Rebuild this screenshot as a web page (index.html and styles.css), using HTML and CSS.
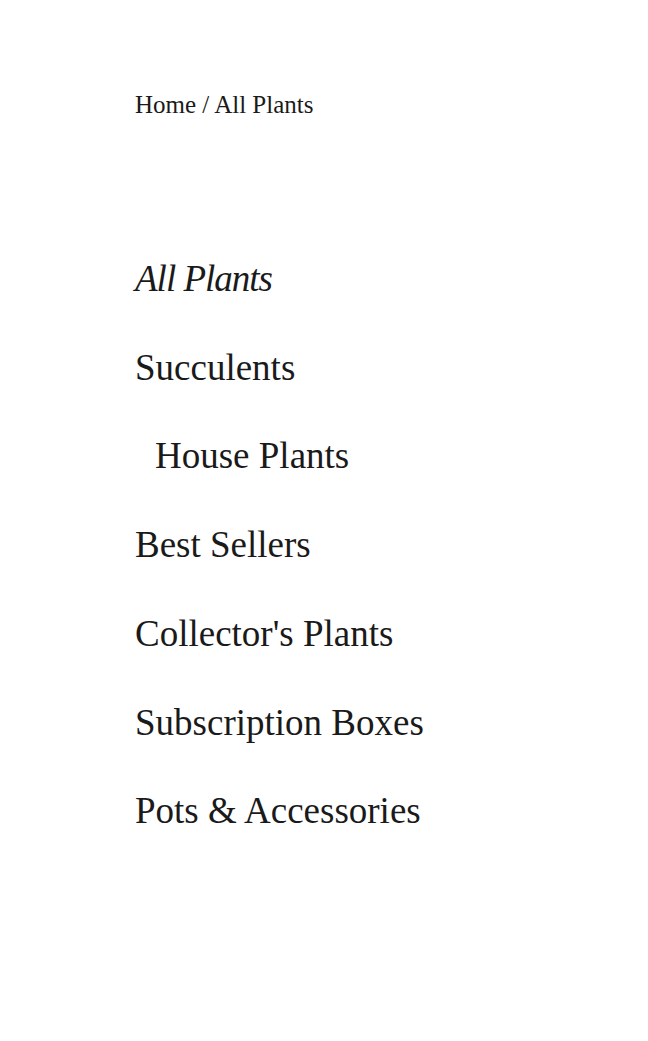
FILE: index.html
```html
<!DOCTYPE html>
<html lang="en">
<head>
<meta charset="utf-8">
<link rel="stylesheet" href="styles.css">
</head>
<body>
<main class="page">
  <nav class="crumbs">Home / All Plants</nav>
  <ul class="menu">
    <li class="item current">All Plants</li>
    <li class="item">Succulents</li>
    <li class="item indent">House Plants</li>
    <li class="item">Best Sellers</li>
    <li class="item">Collector's Plants</li>
    <li class="item">Subscription Boxes</li>
    <li class="item">Pots &amp; Accessories</li>
  </ul>
</main>
</body>
</html>
```
FILE: styles.css
```css
html, body { margin: 0; padding: 0; background: #fff; }
body { font-family: "Liberation Serif", serif; color: #1a1a1a; }
.page { padding: 88px 0 0 135px; }
.crumbs { font-size: 25px; line-height: 34px; }
.menu { list-style: none; margin: 113px 0 0; padding: 0; }
.item { font-size: 37px; line-height: 88.7px; }
.current { font-style: italic; letter-spacing: -1px; }
.indent { padding-left: 20px; }
```
